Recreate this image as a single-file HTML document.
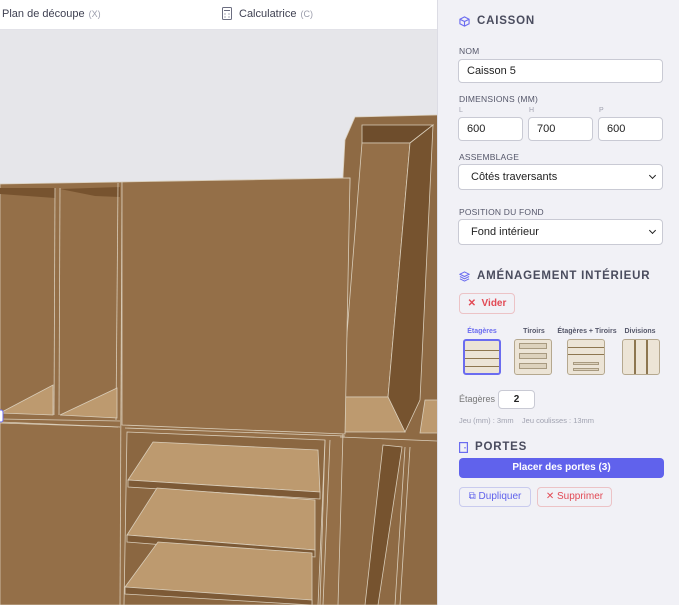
<!DOCTYPE html>
<html><head><meta charset="utf-8"><style>
*{box-sizing:border-box;margin:0;padding:0}
body{width:679px;height:605px;overflow:hidden;font-family:"Liberation Sans",sans-serif;background:#e6e6ea;position:relative}
.top{position:absolute;left:0;top:0;width:437px;height:30px;background:#fff;border-bottom:1px solid #e2e2e8;font-size:11px;color:#3f4152}
.top span.k{color:#9a9cab;font-size:9px;margin-left:4px}
.panel{position:absolute;left:437px;top:0;width:242px;height:605px;background:#f1f1f6;border-left:1px solid #dcdce4}
.h{position:absolute;left:21px;font-size:11.5px;font-weight:bold;color:#4a4c5e;letter-spacing:.8px;display:flex;align-items:center;gap:7px}
.lbl{position:absolute;left:21px;font-size:8.5px;color:#55576a;letter-spacing:.2px}
.sm{position:absolute;font-size:7px;color:#a0a2b0}
.inp{position:absolute;height:24px;background:#fff;border:1px solid #c9cad4;border-radius:4px;font-size:11px;color:#222;padding-left:8px;line-height:22px}
.sel{padding-left:12px}
.sel:after{content:"";position:absolute;right:7px;top:8px;width:4px;height:4px;border-right:1.6px solid #222;border-bottom:1.6px solid #222;transform:rotate(45deg)}
.btn{position:absolute;border-radius:4px;font-size:10px;text-align:center}
.opt{position:absolute;font-size:7px;color:#55576a;font-weight:bold;text-align:center}
.ic{position:absolute;background:#ece4d6;border:1.5px solid #b5a88f;border-radius:3px}
</style></head><body>
<div class="top">
<div style="position:absolute;left:2px;top:8px">Plan de découpe<span class="k">(X)</span></div>
<svg style="position:absolute;left:222px;top:7px" width="10" height="13" viewBox="0 0 10 13"><rect x=".5" y=".5" width="9" height="12" rx="1" fill="none" stroke="#6b6d80"/><line x1="2" y1="3.5" x2="8" y2="3.5" stroke="#6b6d80"/><circle cx="3" cy="7" r=".6" fill="#6b6d80"/><circle cx="7" cy="7" r=".6" fill="#6b6d80"/><circle cx="3" cy="10" r=".6" fill="#6b6d80"/><circle cx="7" cy="10" r=".6" fill="#6b6d80"/></svg>
<div style="position:absolute;left:239px;top:8px">Calculatrice<span class="k">(C)</span></div>
</div>
<svg style="position:absolute;left:0;top:0" width="437" height="605" viewBox="0 0 437 605">
<g stroke="#d9cdb9" stroke-width=".8">
<polygon points="345,140 355,117 438,115 438,605 330,605 338,433 343,177" fill="#8e6a44"/>
<polygon points="362,125 433,125 410,143 362,143" fill="#6e4d2c"/>
<polygon points="362,143 410,143 388,397 342,397" fill="#946f48"/>
<polygon points="410,143 433,125 420,400 405,432 388,397" fill="#76532f"/>
<polygon points="342,397 388,397 405,432 338,432" fill="#bd9a6f"/>
<polygon points="425,400 438,400 438,433 420,433" fill="#bd9a6f"/>
<polygon points="0,184 122,182 350,178 343,433 338,605 0,605" fill="#946f48"/>
<polygon points="0,188 55,188 55,198 0,194" fill="#77532f" stroke="none"/>
<polygon points="60,189 120,187 120,197 95,196" fill="#77532f" stroke="none"/>
<line x1="55" y1="188" x2="54" y2="415"/><line x1="60" y1="188" x2="59" y2="415"/>
<line x1="118" y1="183" x2="116" y2="420"/><line x1="122" y1="182" x2="120" y2="605"/>
<polygon points="0,413 53,385 53,415" fill="#bd9a6f"/>
<polygon points="60,415 117,388 117,418" fill="#bd9a6f"/>
<polygon points="122,182 350,178 345,434 122,425" fill="#946f48"/>
<line x1="0" y1="419" x2="120" y2="421"/><line x1="0" y1="422" x2="120" y2="427"/>
<line x1="125" y1="428" x2="345" y2="436"/><line x1="0" y1="423" x2="118" y2="427"/>
<polygon points="127,432 325,440 320,605 124,605" fill="#8b6741"/>
<polygon points="153,442 318,450 320,492 128,480" fill="#bd9a6f"/>
<polygon points="128,480 320,492 320,499 128,487" fill="#7d5a36"/>
<polygon points="157,488 315,500 315,550 127,535" fill="#bd9a6f"/>
<polygon points="127,535 315,550 315,557 127,542" fill="#7d5a36"/>
<polygon points="158,542 312,553 312,605 125,587" fill="#bd9a6f"/>
<polygon points="125,587 312,600 312,605 125,594" fill="#7d5a36"/>
<line x1="325" y1="440" x2="318" y2="605"/><line x1="330" y1="440" x2="323" y2="605"/>
<polygon points="383,445 402,447 378,605 365,605" fill="#76532f"/>
<line x1="405" y1="447" x2="395" y2="605"/><line x1="410" y1="447" x2="400" y2="605"/>
<line x1="340" y1="437" x2="437" y2="441"/>
</g>
<rect x="-3" y="410" width="6" height="12" rx="2" fill="#fff" stroke="#6b6cf0"/>
</svg>
<div class="panel">
<div class="h" style="top:15px"><svg width="11" height="11" viewBox="0 0 12 12" fill="none" stroke="#6b6cf0" stroke-width="1.2"><path d="M6 1 L11 3.5 V8.5 L6 11 L1 8.5 V3.5 Z M1 3.5 L6 6 L11 3.5 M6 6 V11"/></svg>CAISSON</div>
<div class="lbl" style="top:46px">NOM</div>
<div class="inp" style="left:20px;top:59px;width:205px">Caisson 5</div>
<div class="lbl" style="top:94px">DIMENSIONS (MM)</div>
<div class="sm" style="left:21px;top:107px">L</div><div class="sm" style="left:91px;top:107px">H</div><div class="sm" style="left:161px;top:107px">P</div>
<div class="inp" style="left:20px;top:117px;width:65px">600</div>
<div class="inp" style="left:90px;top:117px;width:65px">700</div>
<div class="inp" style="left:160px;top:117px;width:65px">600</div>
<div class="lbl" style="top:152px">ASSEMBLAGE</div>
<div class="inp sel" style="left:20px;top:164px;width:205px;height:26px;line-height:24px">Côtés traversants</div>
<div class="lbl" style="top:207px">POSITION DU FOND</div>
<div class="inp sel" style="left:20px;top:219px;width:205px;height:26px;line-height:24px">Fond intérieur</div>
<div class="h" style="top:270px"><svg width="11" height="11" viewBox="0 0 12 12" fill="none" stroke="#6b6cf0" stroke-width="1.1"><path d="M6 1 L11 3.5 L6 6 L1 3.5 Z M1 6 L6 8.5 L11 6 M1 8.5 L6 11 L11 8.5"/></svg>AMÉNAGEMENT INTÉRIEUR</div>
<div class="btn" style="left:21px;top:293px;width:56px;height:21px;border:1px solid #ecc3c6;color:#e24a55;line-height:19px;font-weight:bold">✕&nbsp; Vider</div>
<div class="opt" style="left:24px;top:328px;width:40px;color:#6b6cf0">Étagères</div>
<div class="opt" style="left:76px;top:328px;width:40px">Tiroirs</div>
<div class="opt" style="left:119px;top:328px;width:60px">Étagères + Tiroirs</div>
<div class="opt" style="left:182px;top:328px;width:40px">Divisions</div>
<div class="ic" style="left:25px;top:339px;width:38px;height:36px;border-color:#6b6cf0;border-width:2px;background:linear-gradient(#ece4d6 9px,#8d7650 9px,#8d7650 10px,#ece4d6 10px,#ece4d6 17px,#8d7650 17px,#8d7650 18px,#ece4d6 18px,#ece4d6 25px,#8d7650 25px,#8d7650 26px,#ece4d6 26px)"></div>
<div class="ic" style="left:76px;top:339px;width:38px;height:36px">
<div style="position:absolute;left:4px;top:3px;width:28px;height:6px;border:1px solid #a89a80;background:#ddd2bd"></div>
<div style="position:absolute;left:4px;top:13px;width:28px;height:6px;border:1px solid #a89a80;background:#ddd2bd"></div>
<div style="position:absolute;left:4px;top:23px;width:28px;height:6px;border:1px solid #a89a80;background:#ddd2bd"></div></div>
<div class="ic" style="left:129px;top:339px;width:38px;height:36px;background:linear-gradient(#ece4d6 7px,#8d7650 7px,#8d7650 8px,#ece4d6 8px,#ece4d6 14px,#8d7650 14px,#8d7650 15px,#ece4d6 15px)">
<div style="position:absolute;left:5px;top:22px;width:26px;height:3px;border:1px solid #a89a80;background:#ddd2bd"></div>
<div style="position:absolute;left:5px;top:28px;width:26px;height:3px;border:1px solid #a89a80;background:#ddd2bd"></div></div>
<div class="ic" style="left:184px;top:339px;width:38px;height:36px;background:linear-gradient(90deg,#ece4d6 11px,#8d7650 11px,#8d7650 13px,#ece4d6 13px,#ece4d6 23px,#8d7650 23px,#8d7650 25px,#ece4d6 25px)"></div>
<div style="position:absolute;left:21px;top:394px;font-size:9px;color:#777">Étagères</div>
<div class="inp" style="left:60px;top:390px;width:37px;height:19px;line-height:17px;text-align:center;padding:0;font-size:10px;font-weight:bold">2</div>
<div class="sm" style="left:21px;top:416px;font-size:7.5px">Jeu (mm) : 3mm &nbsp;&nbsp; Jeu coulisses : 13mm</div>
<div class="h" style="top:441px"><svg width="9" height="11" viewBox="0 0 9 11" fill="none" stroke="#6b6cf0" stroke-width="1.2"><rect x=".6" y=".6" width="7.8" height="9.8"/><line x1="6" y1="5" x2="6" y2="6.5"/></svg>PORTES</div>
<div class="btn" style="left:21px;top:458px;width:205px;height:20px;background:#6062ec;color:#fff;line-height:20px;font-weight:bold">Placer des portes (3)</div>
<div class="btn" style="left:21px;top:487px;width:72px;height:20px;border:1px solid #c9cbee;color:#6062ec;line-height:18px">⧉ Dupliquer</div>
<div class="btn" style="left:99px;top:487px;width:75px;height:20px;border:1px solid #ecc3c6;color:#e24a55;line-height:18px">✕ Supprimer</div>
</div>
</body></html>
